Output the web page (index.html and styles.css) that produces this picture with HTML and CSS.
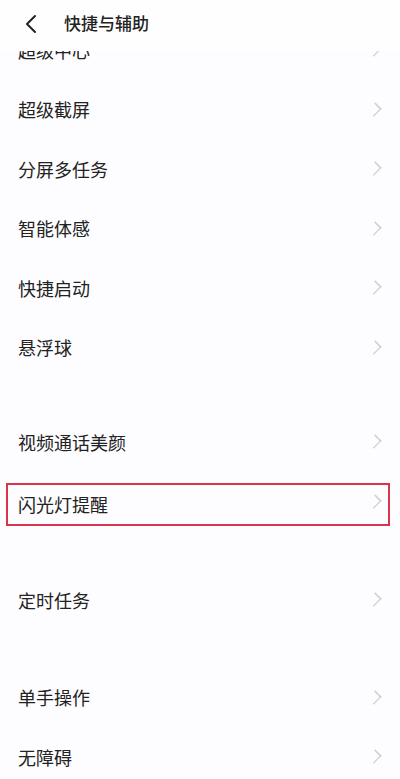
FILE: index.html
```html
<!DOCTYPE html>
<html lang="zh-CN">
<head>
  <meta charset="UTF-8">
  <meta name="viewport" content="width=device-width, initial-scale=1.0">
  <title>快捷与辅助</title>
  <link rel="stylesheet" href="styles.css">
</head>
<body>
  <header class="topbar">
    <svg class="back" width="14" height="20" viewBox="0 0 14 20">
      <polyline points="11,2 3,10 11,18" fill="none" stroke="#222" stroke-width="2" stroke-linecap="round" stroke-linejoin="round"/>
    </svg>
    <h1>快捷与辅助</h1>
  </header>

  <div class="viewport">
    <div class="list">
      <div class="group">
        <div class="row"><span>超级中心</span><i class="chev"></i></div>
        <div class="row"><span>超级截屏</span><i class="chev"></i></div>
        <div class="row"><span>分屏多任务</span><i class="chev"></i></div>
        <div class="row"><span>智能体感</span><i class="chev"></i></div>
        <div class="row"><span>快捷启动</span><i class="chev"></i></div>
        <div class="row"><span>悬浮球</span><i class="chev"></i></div>
      </div>
      <div class="group g2">
        <div class="row"><span>视频通话美颜</span><i class="chev"></i></div>
        <div class="row marked"><span>闪光灯提醒</span><i class="chev"></i></div>
      </div>
      <div class="group g3">
        <div class="row"><span>定时任务</span><i class="chev"></i></div>
      </div>
      <div class="group g4">
        <div class="row"><span>单手操作</span><i class="chev"></i></div>
        <div class="row"><span>无障碍</span><i class="chev"></i></div>
      </div>
    </div>
  </div>
</body>
</html>
```

FILE: styles.css
```css
body {
  margin: 0;
  width: 400px;
  height: 779px;
  overflow: hidden;
  background: #fdfcfe;
  font-family: "Noto Sans CJK SC", "Noto Sans", sans-serif;
  color: #222;
}
.topbar {
  height: 51px;
  display: flex;
  align-items: flex-start;
  background: #fefefe;
  padding-left: 24px;
  box-sizing: border-box;
}
.back {
  margin-top: 14px;
}
.topbar h1 {
  margin: 11px 0 0 26px;
  font-size: 17px;
  font-weight: 500;
  line-height: 24px;
}
.viewport {
  height: 728px;
  overflow: hidden;
}
/* list is scrolled a little, first row sits under the bar */
.list {
  margin-top: -31px;
}
.g2 { margin-top: 35px; }
.g3 { margin-top: 39px; }
.g4 { margin-top: 38px; }
.row {
  height: 59.5px;
  display: flex;
  align-items: center;
  justify-content: space-between;
  padding: 0 20px 0 18px;
  font-size: 18px;
  position: relative;
}
.chev {
  width: 6px;
  height: 6px;
  border-top: 1.5px solid #d2d2d2;
  border-right: 1.5px solid #d2d2d2;
  transform: rotate(45deg) scale(1.3, 1.6);
  margin-right: 2px;
}
.marked span {
  margin-top: 5px;
}
.marked::after {
  content: "";
  position: absolute;
  left: 6px;
  right: 10px;
  top: 11px;
  bottom: 5px;
  border: 2px solid #d8344c;
}
```
